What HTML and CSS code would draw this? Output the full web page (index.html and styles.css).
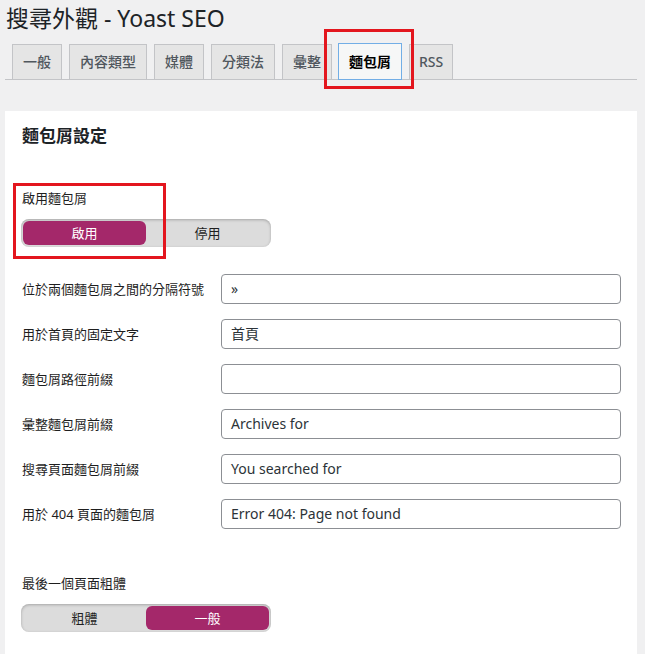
FILE: index.html
```html
<!DOCTYPE html>
<html lang="zh-Hant">
<head>
<meta charset="utf-8">
<title>搜尋外觀 - Yoast SEO</title>
<link rel="stylesheet" href="styles.css">
</head>
<body>
<div class="wrap">
  <h1 class="title">搜尋外觀 - Yoast SEO</h1>
  <nav class="tabs">
    <a class="tab">一般</a>
    <a class="tab">內容類型</a>
    <a class="tab">媒體</a>
    <a class="tab">分類法</a>
    <a class="tab">彙整</a>
    <a class="tab active">麵包屑</a>
    <a class="tab latin">RSS</a>
  </nav>
  <section class="card">
    <h2 class="card-title">麵包屑設定</h2>
    <div class="field-label first">啟用麵包屑</div>
    <div class="toggle">
      <span class="opt on">啟用</span>
      <span class="opt">停用</span>
    </div>
    <div class="rows">
      <div class="row"><label class="row-label">位於兩個麵包屑之間的分隔符號</label><div class="input">»</div></div>
      <div class="row"><label class="row-label">用於首頁的固定文字</label><div class="input">首頁</div></div>
      <div class="row"><label class="row-label">麵包屑路徑前綴</label><div class="input"></div></div>
      <div class="row"><label class="row-label">彙整麵包屑前綴</label><div class="input">Archives for</div></div>
      <div class="row"><label class="row-label">搜尋頁面麵包屑前綴</label><div class="input">You searched for</div></div>
      <div class="row"><label class="row-label">用於 404 頁面的麵包屑</label><div class="input">Error 404: Page not found</div></div>
    </div>
    <div class="field-label second">最後一個頁面粗體</div>
    <div class="toggle">
      <span class="opt">粗體</span>
      <span class="opt on">一般</span>
    </div>
  </section>
</div>
<div class="mark mark-tab"></div>
<div class="mark mark-toggle"></div>
</body>
</html>
```
FILE: styles.css
```css
html, body {
  margin: 0;
  padding: 0;
  background: #f0f0f1;
  font-family: "Noto Sans", "Noto Sans CJK TC", sans-serif;
  color: #1e1e1e;
  overflow: hidden;
}
.wrap {
  padding: 0 8px 0 5px;
}
.title {
  margin: 0;
  padding: 3px 0 0 1px;
  font-size: 23px;
  line-height: 30px;
  font-weight: 400;
  color: #1d2327;
}
.tabs {
  display: flex;
  gap: 7px;
  margin-top: 11px;
  padding-left: 7px;
  border-bottom: 1px solid #c3c4c7;
  height: 35px;
}
.tab {
  box-sizing: border-box;
  height: 35px;
  padding: 0 10px;
  border: 1px solid #c3c4c7;
  border-bottom: none;
  background: #e5e5e5;
  color: #50575e;
  font-size: 14px;
  font-weight: 500;
  line-height: 33px;
  white-space: nowrap;
}
.tab.latin {
  padding: 0 9px;
}
.tab.active {
  height: 37px;
  margin-top: -1px;
  margin-left: -1px;
  background: #f6f7f7;
  color: #000;
  font-weight: 700;
  border: 1px solid #72aee6;
  line-height: 35px;
}
.card {
  margin-top: 31px;
  background: #fff;
  padding: 13px 16px 40px 17px;
  min-height: 500px;
}
.card-title {
  margin: 0;
  font-size: 17px;
  line-height: 24px;
  font-weight: 700;
  color: #1d2327;
}
.field-label {
  font-size: 13px;
  line-height: 18px;
  color: #1e1e1e;
}
.field-label.first {
  margin-top: 41px;
}
.field-label.second {
  margin-top: 45px;
}
.toggle {
  box-sizing: border-box;
  margin-top: 12px;
  margin-left: -1px;
  width: 250px;
  height: 28px;
  padding: 2px;
  border-radius: 8px;
  background: #dcdcdc;
  box-shadow: inset 0 1px 3px rgba(0, 0, 0, 0.25);
  display: grid;
  grid-template-columns: 1fr 1fr;
}
.opt {
  text-align: center;
  font-size: 13px;
  line-height: 24px;
  color: #1e1e1e;
  border-radius: 6px;
}
.opt.on {
  background: #a4286a;
  color: #fff;
}
.rows {
  margin-top: 27px;
  display: flex;
  flex-direction: column;
  gap: 15px;
}
.row {
  display: flex;
  align-items: center;
}
.row-label {
  width: 199px;
  flex: none;
  font-size: 13px;
  line-height: 18px;
  color: #1e1e1e;
}
.input {
  box-sizing: border-box;
  width: 400px;
  height: 30px;
  border: 1px solid #8c8f94;
  border-radius: 4px;
  padding: 0 9px;
  font-size: 14px;
  line-height: 28px;
  color: #2c3338;
}
.mark {
  position: absolute;
  box-sizing: border-box;
  border: 3px solid #e3161e;
}
.mark-tab {
  left: 324px;
  top: 29px;
  width: 90px;
  height: 60px;
}
.mark-toggle {
  left: 13px;
  top: 183px;
  width: 153px;
  height: 76px;
}
```
